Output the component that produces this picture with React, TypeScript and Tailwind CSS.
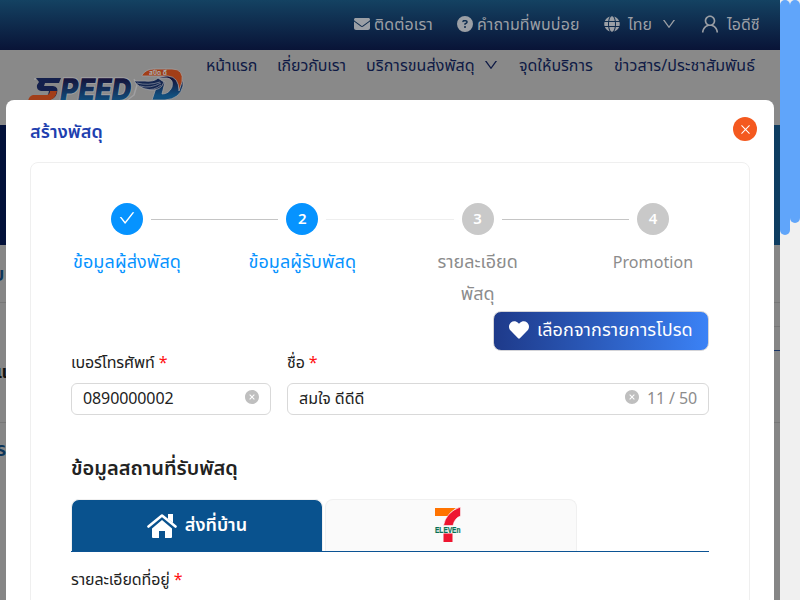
import type { ReactNode } from "react";
import { FaCircleQuestion, FaEnvelope } from "react-icons/fa6";
import { FaGlobe, FaHeart } from "react-icons/fa";
import { AiOutlineCheck, AiOutlineClose, AiOutlineDown, AiOutlineUser, AiFillCloseCircle } from "react-icons/ai";

function Label({ children }: { children: ReactNode }) {
  return (
    <div className="h-8 text-base leading-[30px] tracking-[-0.1px] whitespace-nowrap text-[#222]">
      {children} <span className="text-[#ff1010]">*</span>
    </div>
  );
}

function SpeedLogo() {
  return (
    <svg className="h-11 w-40 overflow-visible" viewBox="0 0 160 44">
      <defs>
        <linearGradient id="ink" x1="0" y1="0" x2="0" y2="1">
          <stop offset="0.2" stopColor="#15133a" />
          <stop offset="0.85" stopColor="#11507f" />
        </linearGradient>
      </defs>
      <path d="M6 18 H8 M106 18 L109 24 L106 34 L98 40 H28" fill="none" stroke="#a0a0a2" strokeWidth="1.500" strokeLinejoin="round" />
      <g fill="url(#ink)" stroke="#a0a0a2" strokeWidth="1.800" paintOrder="stroke" fontFamily="Inter, sans-serif" fontWeight="900">
        <text transform="translate(31 39) skewX(-9)" fontSize="30" textLength="71" lengthAdjust="spacingAndGlyphs">PEED</text>
      </g>
      <path d="M8 17 H33 L31 22 H17 L16 25 H25 Q31 26 29 32 Q27 39 19 39 H12 L14 34 H20 L21 30 H13 Q8 29 9 24 L11 21Z" fill="#14204c" />
      <path d="M5 34 H19 Q22 33 22 30 H29 Q28 39 18 40 H0 Q1 35 5 34Z" fill="#a23e18" />
      <g stroke="#a0a0a2" strokeWidth=".8">
        <path d="M129 17 H139 Q146 18 144 26 Q141 33 134 33 L137 21 H130 L124 39 H137 Q152 38 155 25 Q156 17 149 12 Z" fill="url(#ink)" />
        <path d="M114 14 Q118 8 126 8 H144 Q156 8 154 21 L151 30 Q151 16 140 15 H114 Z" fill="#a23e18" />
      </g>
      <path d="M106 20 H117 Q126 21 130 17 L136 21 Q133 30 122 29 Q112 28 106 20Z" fill="#142650" stroke="#a0a0a2" strokeWidth=".8" />
      <path d="M109 22 Q120 25 132 21 M112 25 Q122 28 133 22 M117 28 Q126 30 133 24" fill="none" stroke="#8d93a0" strokeWidth=".7" />
      <text x="121" y="14" fontSize="7" fontWeight="700" textLength="18" lengthAdjust="spacingAndGlyphs" fill="#aaa">สปีด ดี</text>
    </svg>
  );
}

function SevenLogo() {
  return (
    <svg className="mr-[7px] -mt-0.5 h-9 w-7" viewBox="0 0 28 36">
      <path d="M1 1h21q-5 3-8 8H1z" fill="#ff7300" />
      <path d="M26.500 0v9q-6 2-7.500 9.500H9.500Q12 5 26.500 0Z" fill="#ee1530" stroke="#fafafa" strokeWidth=".6" />
      <path d="M9.500 26.500h9v8.500h-9z" fill="#ee1530" />
      <text x="1" y="25.500" fontSize="9" fontWeight="900" fontFamily="Liberation Sans" textLength="25.500" lengthAdjust="spacingAndGlyphs" fill="#087052" stroke="#087052" strokeWidth=".2">ELEVEn</text>
    </svg>
  );
}

function StepDot({ active, children }: { active?: boolean; children: ReactNode }) {
  return (
    <div className={active ? "flex size-8 shrink-0 items-center justify-center rounded-full bg-[#0693ff] pb-0.5 text-[15px] font-semibold text-white" : "flex size-8 shrink-0 items-center justify-center rounded-full bg-[#c9c9c9] pb-0.5 text-[15px] font-semibold text-white"}>
      {children}
    </div>
  );
}

function Backdrop() {
  return (
    <div className="h-[600px] bg-[#868686]">
      <div className="flex h-[50px] items-center bg-linear-to-b from-[#144262] to-[#091437] pr-5 pb-0.5 text-base text-[#9b9fa5]">
        <div className="ml-auto flex items-center whitespace-nowrap">
          <FaEnvelope className="mr-1 size-4" />
          <span className="mr-6 w-[59px] tracking-[0.1px]">ติดต่อเรา</span>
          <FaCircleQuestion className="mr-1 size-4" />
          <span className="mr-6 w-[103px] tracking-[0.15px]">คำถามที่พบบ่อย</span>
          <FaGlobe className="mr-2 size-4" />
          <span className="mr-2 w-[25px]">ไทย</span>
          <AiOutlineDown className="mr-[22px] size-4" />
          <AiOutlineUser className="mr-1.5 size-[22px]" />
          <span className="w-[33px]">ไอดีซี</span>
        </div>
      </div>
      <div className="flex h-[75px] bg-[#898989] pl-7">
        <div className="w-[178px] pt-[11px]"><SpeedLogo /></div>
        <div className="flex h-[30px] items-center text-base whitespace-nowrap text-[#0e1a45]">
          <span className="mr-5 w-[51px] tracking-[-0.15px]">หน้าแรก</span>
          <span className="mr-5 w-[69px] tracking-[-0.1px]">เกี่ยวกับเรา</span>
          <span className="mr-2 w-[109px] tracking-[0.08px]">บริการขนส่งพัสดุ</span>
          <AiOutlineDown className="mr-5 size-4" />
          <span className="mr-5 w-[75px]">จุดให้บริการ</span>
          <span className="w-[142px] tracking-[0.1px]">ข่าวสาร/ประชาสัมพันธ์</span>
        </div>
      </div>
      <div className="h-[120px] bg-linear-to-r from-[#021039] to-[#0e3d61]" />
      <div className="flex h-[58px] items-center border-b border-[#777]">
        <span className="-ml-2 text-xl font-semibold text-[#0b3458]">บ</span>
      </div>
      <div className="flex h-[120px] justify-between border-b border-[#777] pt-[54px]">
        <span className="-ml-1 text-lg font-bold text-[#111]">แ</span>
        <span className="-mt-[31px] h-[25px] w-2 border-y border-t-[#777] border-b-[#193465]" />
      </div>
      <div className="pt-3"><span className="-ml-1 text-xl font-semibold text-[#0b3458]">ร</span></div>
    </div>
  );
}

export default function App() {
  return (
    <div className="relative flex h-[600px] w-[800px] overflow-hidden font-['Noto_Sans','Noto_Sans_Thai',sans-serif]">
      <div className="w-[780px]"><Backdrop /></div>
      <div className="flex w-5 bg-[#f0f0f0]">
        <div className="h-[235px] w-2.5 rounded-full bg-[#60a5fa]" />
        <div className="h-[223px] w-2.5 rounded-full bg-[#60a5fa]" />
      </div>

      <div className="absolute top-[100px] left-1.5 h-[500px] w-[768px] overflow-hidden rounded-t-lg bg-white px-6 pt-[17px]">
        <div className="flex h-[45px] justify-between">
          <h1 className="h-7 text-[18px] leading-7 font-semibold tracking-[0.1px] whitespace-nowrap text-[#1e40af]">สร้างพัสดุ</h1>
          <button className="-mr-[7px] flex size-6 items-center justify-center rounded-full bg-[#f4591f] text-white"><AiOutlineClose className="size-[13px]" /></button>
        </div>
        <div className="h-[500px] rounded-lg border border-[#efefef] px-10 pt-10">
          <div className="flex items-center gap-2 px-10">
            <StepDot active><AiOutlineCheck className="size-[18px]" /></StepDot>
            <div className="h-px flex-1 bg-[#c5c5c5]" />
            <StepDot active>2</StepDot>
            <div className="h-px flex-1 bg-[#eee]" />
            <StepDot>3</StepDot>
            <div className="h-px flex-1 bg-[#c5c5c5]" />
            <StepDot>4</StepDot>
          </div>
          <div className="mt-2.5 flex h-[66px] justify-between text-center text-[18px] leading-8 whitespace-nowrap text-[#8c8c8c]">
            <div className="w-28 tracking-[0.1px] text-[#0693ff]">ข้อมูลผู้ส่งพัสดุ</div>
            <div className="w-28 tracking-[0.1px] text-[#0693ff]">ข้อมูลผู้รับพัสดุ</div>
            <div className="w-28">รายละเอียด<br />พัสดุ</div>
            <div className="w-28 pt-px text-base leading-8 tracking-[0.1px]">Promotion</div>
          </div>
          <div className="flex h-10 justify-end">
            <button className="flex h-10 w-[216px] items-center rounded-lg border border-[#d4d4d8] bg-linear-to-r from-[#1e3a8a] to-[#3b82f6] pb-0.5 pl-[15px] text-[18px] whitespace-nowrap text-white">
              <FaHeart className="mr-2 size-5" /><span className="pb-0.5 tracking-[0.1px]">เลือกจากรายการโปรด</span>
            </button>
          </div>
          <div className="-mt-1 flex gap-4">
            <div className="w-[200px]">
              <Label>เบอร์โทรศัพท์</Label>
              <div className="mt-1 flex h-8 items-center rounded-md border border-[#d9d9d9] px-[11px] text-base text-[#222]">
                <span className="-mt-0.5 flex-1 tracking-[-0.1px]">0890000002</span><AiFillCloseCircle className="-mt-1 -mr-px size-4 text-[#bfbfbf]" />
              </div>
            </div>
            <div className="flex-1">
              <Label>ชื่อ</Label>
              <div className="mt-1 flex h-8 items-center rounded-md border border-[#d9d9d9] px-[11px] text-base text-[#222]">
                <span className="-mt-0.5 flex-1">สมใจ ดีดีดี</span><AiFillCloseCircle className="-mt-1 mr-[7px] size-4 text-[#bfbfbf]" /><span className="-mt-0.5 tracking-[-0.12px] text-[#8c8c8c]">11 / 50</span>
              </div>
            </div>
          </div>
          <h2 className="mt-[37px] h-8 text-[20px] leading-8 font-semibold whitespace-nowrap text-[#222]">ข้อมูลสถานที่รับพัสดุ</h2>
          <div className="mt-[15px] flex h-[53px] gap-0.5 border-b border-[#0b5394]">
            <div className="flex w-[252px] items-center justify-center rounded-t-lg border border-b-0 border-[#f0f0f0] bg-[#09528e] text-[18px] font-semibold text-white">
              <svg className="mr-2 h-6 w-[30px]" viewBox="0 0 30 24" fill="none">
                <path d="M5 14.500 15 6l10 8.500V23q0 1-1 1h-6v-7h-6v7H6q-1 0-1-1Z" fill="#fff" />
                <path d="M1.500 12.500 15 1.500 28.500 12.500" stroke="#09528e" strokeWidth="5" />
                <path d="M21 0h5v9l-5-4Z" fill="#fff" />
                <path d="M1.500 12.500 15 1.500 28.500 12.500" stroke="#fff" strokeWidth="2.600" strokeLinecap="round" strokeLinejoin="round" />
              </svg>
              <span className="pb-0.5">ส่งที่บ้าน</span>
            </div>
            <div className="flex w-[252px] items-center justify-center rounded-t-lg border border-b-0 border-[#f0f0f0] bg-[#fafafa]"><SevenLogo /></div>
          </div>
          <div className="mt-3"><Label>รายละเอียดที่อยู่</Label></div>
        </div>
      </div>
    </div>
  );
}
